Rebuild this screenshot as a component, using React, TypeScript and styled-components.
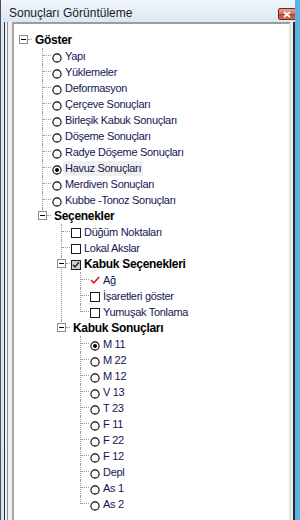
import React from "react";
import styled, { createGlobalStyle, css } from "styled-components";

type StateKind = "radio" | "radioOn" | "check" | "checkGray" | "tick";

interface TreeNode {
  label: string
  bold?: boolean
  state?: StateKind
  hot?: boolean
  children?: TreeNode[]
}

const radios = (labels: string[], selected?: string): TreeNode[] =>
  labels.map((label) => ({ label, state: label === selected ? "radioOn" : "radio" }))

const tree: TreeNode = {
  label: "Göster",
  bold: true,
  children: [
    ...radios([
      "Yapı",
      "Yüklemeler",
      "Deformasyon",
      "Çerçeve Sonuçları",
      "Birleşik Kabuk Sonuçları",
      "Döşeme Sonuçları",
      "Radye Döşeme Sonuçları",
      "Havuz Sonuçları",
      "Merdiven Sonuçları",
      "Kubbe -Tonoz Sonuçları",
    ], "Havuz Sonuçları").map((n) => (n.label === "Havuz Sonuçları" ? { ...n, hot: true } : n)),
    {
      label: "Seçenekler",
      bold: true,
      children: [
        { label: "Düğüm Noktaları", state: "check" },
        { label: "Lokal Akslar", state: "check" },
        {
          label: "Kabuk Seçenekleri",
          bold: true,
          state: "checkGray",
          children: [
            { label: "Ağ", state: "tick" },
            { label: "İşaretleri göster", state: "check" },
            { label: "Yumuşak Tonlama", state: "check" },
          ],
        },
        {
          label: "Kabuk Sonuçları",
          bold: true,
          children: radios(
            ["M 11", "M 22", "M 12", "V 13", "T 23", "F 11", "F 22", "F 12", "Depl", "As 1", "As 2"],
            "M 11"
          ),
        },
      ],
    },
  ],
}

const GlobalStyle = createGlobalStyle`
  html, body {
    margin: 0;
    padding: 0;
    background: #ffffff;
  }
  body {
    font-family: "Liberation Sans", Arial, sans-serif;
  }
`

const Window = styled.div`
  width: 300px;
  height: 520px;
  box-sizing: border-box;
  display: flex;
  flex-direction: column;
  overflow: hidden;
  border-left: 1px solid #4a4f55;
  border-right: 5px solid #5ab6e2;
  background: linear-gradient(180deg, #eef4fb 0, #dde8f5 22px, #d7e5f3 100%);
`

const TitleBar = styled.div`
  height: 22px;
  box-sizing: border-box;
  display: flex;
  align-items: flex-start;
  padding: 6px 0 0 8px;
`

const Title = styled.span`
  font-size: 12px;
  line-height: 14px;
  color: #1b1b1b;
`

const CloseButton = styled.div`
  margin: 2px -1px 0 auto;
  width: 18px;
  height: 12px;
  box-sizing: border-box;
  border: 1px solid #6e2b22;
  border-radius: 2px;
  background: linear-gradient(180deg, #e9a697 0%, #d9705c 45%, #c1432f 55%, #d0705a 100%);
  display: flex;
  align-items: center;
  justify-content: center;
`

const Body = styled.div`
  flex: 1;
  min-height: 0;
  display: flex;
  margin-left: 3px;
`

const ClientArea = styled.div`
  flex: 1;
  display: flex;
  border-left: 1px solid #2f3338;
  border-right: 2px solid #2b2b2b;
  padding-left: 2px;
  background: #e9f1fa;
`

const Inner = styled.div`
  flex: 1;
  display: flex;
  border-left: 1px solid #8f8f8f;
  padding: 0 2px 0 4px;
  background: #efefef;
`

const Panel = styled.div`
  flex: 1;
  background: #ffffff;
  border-top: 2px solid #9c9c9c;
  border-left: 2px solid #a3a3a3;
  border-right: 2px solid #e1e1e1;
  padding-top: 8px;
  overflow: hidden;
`

const RootList = styled.ul`
  list-style: none;
  margin: 0;
  padding: 0 0 0 5px;
`

const ChildList = styled.ul`
  list-style: none;
  margin: 0;
  padding: 0 0 0 19px;
`

const Item = styled.li<{ $root?: boolean; $last?: boolean }>`
  position: relative;
  ${({ $root, $last }) =>
    !$root &&
    css`
      &::before {
        content: "";
        position: absolute;
        left: 4px;
        top: 0;
        ${$last ? "height: 8px;" : "bottom: 0;"}
        border-left: 1px dotted #9a9a9a;
      }
    `}
`

const Row = styled.div`
  position: relative;
  z-index: 1;
  display: flex;
  align-items: center;
  height: 16px;
`

const ToggleSlot = styled.span<{ $leaf?: boolean }>`
  position: relative;
  flex: none;
  width: 13px;
  height: 16px;

  &::after {
    content: "";
    position: absolute;
    top: 7px;
    left: ${({ $leaf }) => ($leaf ? "5px" : "9px")};
    right: 0;
    border-top: 1px dotted #9a9a9a;
  }
`

const Expander = styled.span`
  position: absolute;
  left: 0;
  top: 3px;
  width: 9px;
  height: 9px;
  box-sizing: border-box;
  border: 1px solid #8c8c8c;
  background: #ffffff;

  &::after {
    content: "";
    position: absolute;
    left: 1px;
    right: 1px;
    top: 3px;
    border-top: 1px solid #000000;
  }
`

const StateBox = styled.span<{ $kind: StateKind }>`
  flex: none;
  margin-left: 1px;
  width: 10px;
  height: 10px;
  display: flex;
  align-items: center;
  justify-content: center;
  box-sizing: border-box;
  ${({ $kind }) => ($kind === "radio" || $kind === "radioOn") && css`margin-top: 4px;`}
  ${({ $kind }) =>
    ($kind === "check" || $kind === "checkGray") &&
    css`
      margin-top: 2px;
      border: 1px solid #1c1c1c;
      background: ${$kind === "checkGray" ? "#cfcfcf" : "#ffffff"};
    `}
`

const Label = styled.span<{ $bold?: boolean; $hot?: boolean }>`
  margin-left: 1px;
  padding: 0 2px;
  white-space: nowrap;
  line-height: 15px;
  font-size: ${({ $bold }) => ($bold ? "12px" : "11px")};
  font-weight: ${({ $bold }) => ($bold ? 700 : 400)};
  letter-spacing: ${({ $bold }) => ($bold ? "-0.3px" : "-0.3px")};
  color: ${({ $bold }) => ($bold ? "#000000" : "#121654")};
  background: ${({ $hot }) => ($hot ? "#efefef" : "transparent")};
`

const StateIcon = ({ kind }: { kind: StateKind }) => {
  if (kind === "radio" || kind === "radioOn") {
    return (
      <StateBox $kind={kind}>
        <svg width="10" height="10" viewBox="0 0 10 10">
          <circle cx="5" cy="5" r="4.1" fill="#fff" stroke="#000" strokeWidth="1.1" />
          {kind === "radioOn" && <circle cx="5" cy="5" r="2" fill="#000" />}
        </svg>
      </StateBox>
    )
  }
  if (kind === "tick") {
    return (
      <StateBox $kind={kind}>
        <svg width="10" height="8" viewBox="0 0 10 8">
          <path d="M1 4 L3.8 6.8 L9.2 1" fill="none" stroke="#e0141e" strokeWidth="1.6" />
        </svg>
      </StateBox>
    )
  }
  return (
    <StateBox $kind={kind}>
      {kind === "checkGray" && (
        <svg width="8" height="8" viewBox="0 0 8 8">
          <path d="M1 3.8 L3 6 L7 1.2" fill="none" stroke="#222" strokeWidth="1.4" />
        </svg>
      )}
    </StateBox>
  )
}

const TreeItem = ({ node, root, last }: { node: TreeNode; root?: boolean; last?: boolean }) => {
  const hasKids = !!node.children?.length
  return (
    <Item $root={root} $last={last}>
      <Row>
        <ToggleSlot $leaf={!hasKids}>{hasKids && <Expander />}</ToggleSlot>
        {node.state && <StateIcon kind={node.state} />}
        <Label $bold={node.bold} $hot={node.hot}>{node.label}</Label>
      </Row>
      {hasKids && (
        <ChildList>
          {node.children!.map((child, i) => (
            <TreeItem key={child.label} node={child} last={i === node.children!.length - 1} />
          ))}
        </ChildList>
      )}
    </Item>
  )
}

export default function App() {
  return (
    <>
      <GlobalStyle />
      <Window>
        <TitleBar>
          <Title>Sonuçları Görüntüleme</Title>
          <CloseButton>
            <svg width="8" height="7" viewBox="0 0 8 7">
              <path d="M1 1 L7 6 M7 1 L1 6" stroke="#fff" strokeWidth="1.8" />
            </svg>
          </CloseButton>
        </TitleBar>
        <Body>
          <ClientArea>
            <Inner>
              <Panel>
                <RootList>
                  <TreeItem node={tree} root />
                </RootList>
              </Panel>
            </Inner>
          </ClientArea>
        </Body>
      </Window>
    </>
  )
}
